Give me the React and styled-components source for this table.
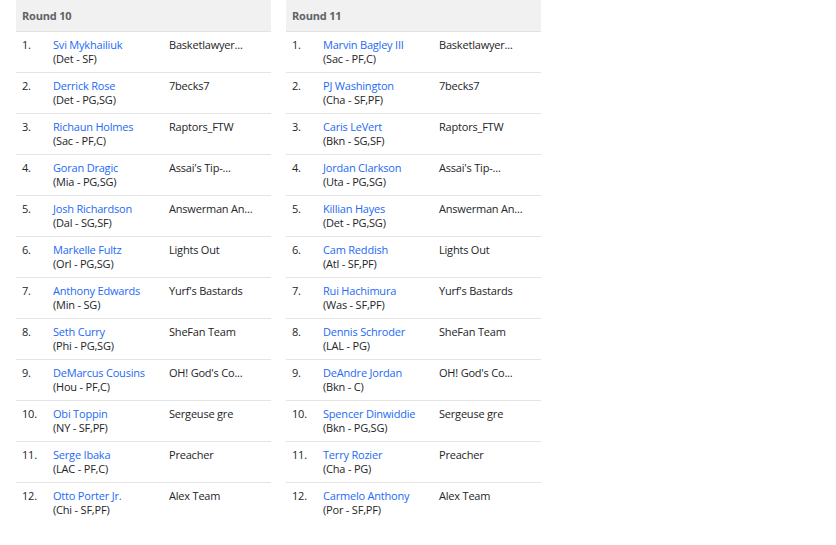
import React from "react";
import styled, { createGlobalStyle } from "styled-components";

const Global = createGlobalStyle`
  html, body { margin: 0; padding: 0; background: #fff; }
  body { font-family: "Open Sans", "Noto Sans", Arial, sans-serif; }
`;

const Page = styled.div`
  display: flex;
  gap: 15px;
  padding-left: 16px;
  align-items: flex-start;
`;

const Table = styled.div`
  width: 255px;
  display: flex;
  flex-direction: column;
`;

const Header = styled.div`
  height: 31px;
  background: #f1f1f1;
  border-bottom: 1px solid #e2e2e2;
  display: flex;
  align-items: center;
  padding-left: 6px;
  font-size: 11px;
  font-weight: 700;
  color: #606266;
  letter-spacing: -0.2px;
`;

const Row = styled.div`
  display: grid;
  grid-template-columns: 31px 116px 1fr;
  padding: 6px 0 6px 6px;
  height: 28px;
  border-bottom: ${(p) => (p.$last ? "1px solid transparent" : "1px solid #e4e4e4")};
  font-size: 11px;
  line-height: 14px;
  letter-spacing: -0.2px;
  color: #232527;
`;

const Num = styled.div``;

const Player = styled.div`
  display: flex;
  flex-direction: column;
  white-space: nowrap;
`;

const Name = styled.a`
  color: #1d6af5;
  text-decoration: none;
`;

const Pos = styled.span``;

const Team = styled.div`
  white-space: nowrap;
`;

const teams = [
  "Basketlawyer...",
  "7becks7",
  "Raptors_FTW",
  "Assai's Tip-...",
  "Answerman An...",
  "Lights Out",
  "Yurf's Bastards",
  "SheFan Team",
  "OH! God's Co...",
  "Sergeuse gre",
  "Preacher",
  "Alex Team",
];

const rounds = [
  {
    title: "Round 10",
    picks: [
      ["Svi Mykhailiuk", "(Det - SF)"],
      ["Derrick Rose", "(Det - PG,SG)"],
      ["Richaun Holmes", "(Sac - PF,C)"],
      ["Goran Dragic", "(Mia - PG,SG)"],
      ["Josh Richardson", "(Dal - SG,SF)"],
      ["Markelle Fultz", "(Orl - PG,SG)"],
      ["Anthony Edwards", "(Min - SG)"],
      ["Seth Curry", "(Phi - PG,SG)"],
      ["DeMarcus Cousins", "(Hou - PF,C)"],
      ["Obi Toppin", "(NY - SF,PF)"],
      ["Serge Ibaka", "(LAC - PF,C)"],
      ["Otto Porter Jr.", "(Chi - SF,PF)"],
    ],
  },
  {
    title: "Round 11",
    picks: [
      ["Marvin Bagley III", "(Sac - PF,C)"],
      ["PJ Washington", "(Cha - SF,PF)"],
      ["Caris LeVert", "(Bkn - SG,SF)"],
      ["Jordan Clarkson", "(Uta - PG,SG)"],
      ["Killian Hayes", "(Det - PG,SG)"],
      ["Cam Reddish", "(Atl - SF,PF)"],
      ["Rui Hachimura", "(Was - SF,PF)"],
      ["Dennis Schroder", "(LAL - PG)"],
      ["DeAndre Jordan", "(Bkn - C)"],
      ["Spencer Dinwiddie", "(Bkn - PG,SG)"],
      ["Terry Rozier", "(Cha - PG)"],
      ["Carmelo Anthony", "(Por - SF,PF)"],
    ],
  },
];

export default function App() {
  return (
    <>
      <Global />
      <Page>
        {rounds.map((r) => (
          <Table key={r.title}>
            <Header>{r.title}</Header>
            {r.picks.map(([name, pos], i) => (
              <Row key={name} $last={i === r.picks.length - 1}>
                <Num>{i + 1}.</Num>
                <Player>
                  <Name href="#">{name}</Name>
                  <Pos>{pos}</Pos>
                </Player>
                <Team>{teams[i]}</Team>
              </Row>
            ))}
          </Table>
        ))}
      </Page>
    </>
  );
}
